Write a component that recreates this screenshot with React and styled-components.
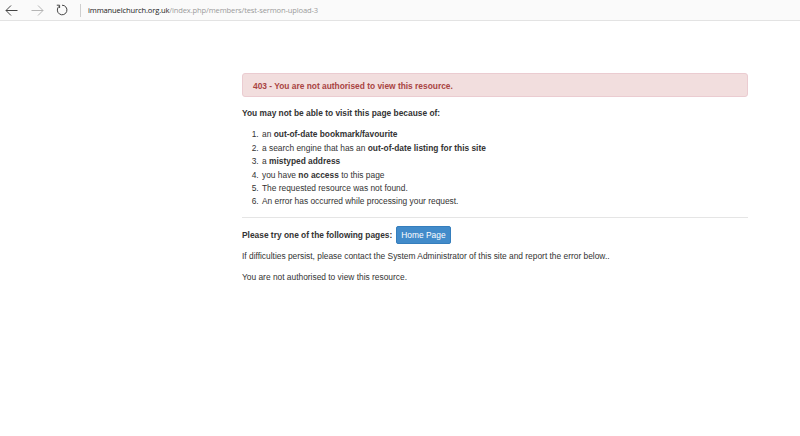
import React from 'react';
import styled, { createGlobalStyle } from 'styled-components';

const GlobalStyle = createGlobalStyle`
    html, body {
        margin: 0;
        padding: 0;
        background: #ffffff;
    }
    body {
        font-family: "Liberation Sans", Arial, sans-serif;
        color: #333333;
    }
`;

// browser chrome

const Toolbar = styled.div`
    height: 20px;
    display: flex;
    align-items: center;
    background: #fafafa;
    border-bottom: 1px solid #e3e3e3;
    padding-left: 5px;
`;

const NavButton = styled.span`
    width: 13px;
    height: 13px;
    display: flex;
    align-items: center;
    justify-content: center;
    margin-right: ${props => props.gap}px;
    color: ${props => (props.disabled ? '#b5b5b5' : '#444')};
`;

const Divider = styled.span`
    width: 1px;
    height: 13px;
    background: #cfcfcf;
    margin: 0 7px 0 0;
`;

const Address = styled.div`
    font-family: "Open Sans", "Liberation Sans", sans-serif;
    font-size: 7.6px;
    letter-spacing: -0.15px;
    color: #9a9a9a;
`;

const Host = styled.span`
    color: #222;
`;

// page

const Page = styled.div`
    width: 506px;
    margin-left: 242px;
    padding-top: 52px;
    font-size: 8.4px;
    line-height: 13.4px;
`;

const Alert = styled.div`
    background: #f2dede;
    border: 1px solid #ebccd1;
    border-radius: 3px;
    color: #a94442;
    font-weight: bold;
    padding: 6px 10px 0;
    height: 24px;
    box-sizing: border-box;
    margin-bottom: 10px;
`;

const Lead = styled.p`
    font-weight: bold;
    margin: 0 0 8px;
`;

const Reasons = styled.ol`
    margin: 0 0 8px;
    padding-left: 19px;
`;

const Reason = styled.li`
    padding-left: 1px;
`;

const Rule = styled.hr`
    border: 0;
    border-top: 1px solid #e5e5e5;
    margin: 0 0 9px;
`;

const TryLine = styled.p`
    display: flex;
    align-items: center;
    gap: 4px;
    font-weight: bold;
    margin: 0 0 6px;
`;

const HomeButton = styled.a`
    display: inline-block;
    background: #428bca;
    border: 1px solid #357ebd;
    border-radius: 2px;
    color: #ffffff;
    font-size: 8.4px;
    font-weight: normal;
    text-decoration: none;
    padding: 2px 4px;
    line-height: 12px;
    margin-top: -1px;
`;

const Note = styled.p`
    margin: 0 0 8px;
`;

const Arrow = ({ dir }) => (
    <svg width="13" height="11" viewBox="0 0 13 11" fill="none" stroke="currentColor" strokeWidth="1">
        {dir === 'left' ? (
            <path d="M12.5 5.5H1M6 0.5L1 5.5L6 10.5" />
        ) : (
            <path d="M0.5 5.5H12M7 0.5L12 5.5L7 10.5" />
        )}
    </svg>
);

const Refresh = () => (
    <svg width="12" height="12" viewBox="0 0 12 12" fill="none" stroke="currentColor" strokeWidth="1">
        <path d="M3.2 2.2A4.8 4.8 0 1 0 6 1.2" />
        <path d="M0.8 1.2H3.6V4" />
    </svg>
);

const App = () => {
    return (
        <>
            <GlobalStyle />
            <Toolbar>
                <NavButton gap={13}><Arrow dir="left" /></NavButton>
                <NavButton gap={11} disabled><Arrow dir="right" /></NavButton>
                <NavButton gap={12}><Refresh /></NavButton>
                <Divider />
                <Address>
                    <Host>immanuelchurch.org.uk</Host>/index.php/members/test-sermon-upload-3
                </Address>
            </Toolbar>
            <Page>
                <Alert>403 - You are not authorised to view this resource.</Alert>
                <Lead>You may not be able to visit this page because of:</Lead>
                <Reasons>
                    <Reason>an <b>out-of-date bookmark/favourite</b></Reason>
                    <Reason>a search engine that has an <b>out-of-date listing for this site</b></Reason>
                    <Reason>a <b>mistyped address</b></Reason>
                    <Reason>you have <b>no access</b> to this page</Reason>
                    <Reason>The requested resource was not found.</Reason>
                    <Reason>An error has occurred while processing your request.</Reason>
                </Reasons>
                <Rule />
                <TryLine>
                    Please try one of the following pages:
                    <HomeButton href="#">Home Page</HomeButton>
                </TryLine>
                <Note>If difficulties persist, please contact the System Administrator of this site and report the error below..</Note>
                <Note>You are not authorised to view this resource.</Note>
            </Page>
        </>
    );
};

export default App;
